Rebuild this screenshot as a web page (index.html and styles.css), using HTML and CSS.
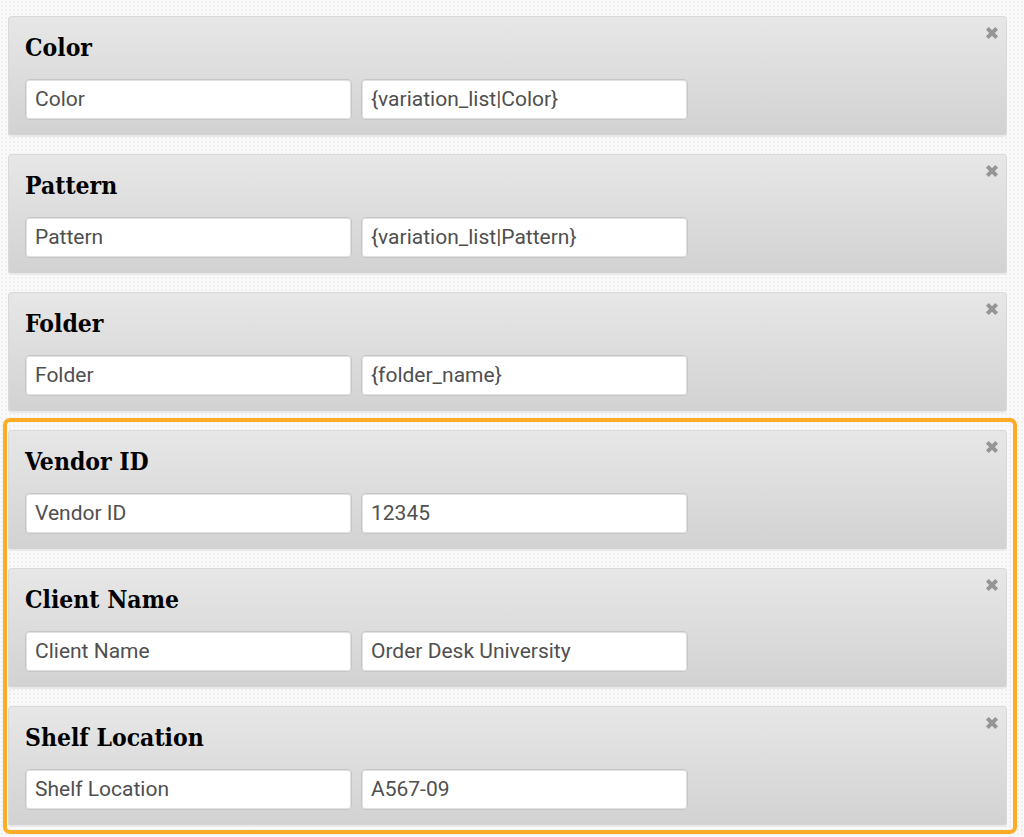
FILE: index.html
```html
<!DOCTYPE html>
<html>
<head>
<meta charset="utf-8">
<link rel="stylesheet" href="styles.css">
</head>
<body>
<div class="list">
  <div class="card">
    <svg class="close" viewBox="0 0 12 12"><path d="M2 2L10 10M10 2L2 10"/></svg>
    <div class="title">Color</div>
    <div class="fields"><div class="field">Color</div><div class="field">{variation_list|Color}</div></div>
  </div>
  <div class="card">
    <svg class="close" viewBox="0 0 12 12"><path d="M2 2L10 10M10 2L2 10"/></svg>
    <div class="title">Pattern</div>
    <div class="fields"><div class="field">Pattern</div><div class="field">{variation_list|Pattern}</div></div>
  </div>
  <div class="card">
    <svg class="close" viewBox="0 0 12 12"><path d="M2 2L10 10M10 2L2 10"/></svg>
    <div class="title">Folder</div>
    <div class="fields"><div class="field">Folder</div><div class="field">{folder_name}</div></div>
  </div>
  <div class="group">
    <div class="card">
      <svg class="close" viewBox="0 0 12 12"><path d="M2 2L10 10M10 2L2 10"/></svg>
      <div class="title">Vendor ID</div>
      <div class="fields"><div class="field">Vendor ID</div><div class="field">12345</div></div>
    </div>
    <div class="card">
      <svg class="close" viewBox="0 0 12 12"><path d="M2 2L10 10M10 2L2 10"/></svg>
      <div class="title">Client Name</div>
      <div class="fields"><div class="field">Client Name</div><div class="field">Order Desk University</div></div>
    </div>
    <div class="card">
      <svg class="close" viewBox="0 0 12 12"><path d="M2 2L10 10M10 2L2 10"/></svg>
      <div class="title">Shelf Location</div>
      <div class="fields"><div class="field">Shelf Location</div><div class="field">A567-09</div></div>
    </div>
  </div>
</div>
</body>
</html>
```

FILE: styles.css
```css
html, body {
  margin: 0;
  height: 100%;
}
body {
  background-color: #f9f9f9;
  background-image: radial-gradient(circle, #efefef 1px, transparent 1.2px);
  background-size: 4px 4px;
  padding: 16px 17px 0 8px;
  box-sizing: border-box;
  overflow: hidden;
}
.list {
  width: 999px;
}
.card {
  position: relative;
  box-sizing: border-box;
  height: 121px;
  margin-bottom: 17px;
  padding: 16px 17px 0 16px;
  border: 1px solid #d9d9d9;
  border-bottom: 2px solid #e9e9e9;
  border-radius: 4px;
  background: linear-gradient(#e7e7e7, #d2d2d2);
}
.close {
  position: absolute;
  top: 9px;
  right: 7px;
  width: 14px;
  height: 14px;
  fill: none;
  stroke: #959595;
  stroke-width: 3.4;
}
.title {
  font-family: "DejaVu Serif", serif;
  font-stretch: condensed;
  font-weight: bold;
  font-size: 24.5px;
  line-height: 30px;
  color: #000;
}
.fields {
  display: flex;
  gap: 9px;
  margin-top: 16px;
}
.field {
  box-sizing: border-box;
  width: 327px;
  height: 41px;
  padding: 0 9px;
  border: 1px solid #c6c6c6;
  box-shadow: inset 0 0 0 1px #e2e2e2;
  border-radius: 4px;
  background: #fff;
  font-family: Roboto, "Liberation Sans", sans-serif;
  font-size: 21px;
  line-height: 39px;
  color: #4f4f4f;
  white-space: nowrap;
}
.group {
  margin: -12px -10px 0 -5px;
  padding: 8px 6px 0 1px;
  border: 4px solid #fdac25;
  border-radius: 7px;
}
.group .card:last-child {
  margin-bottom: 3px;
}
```
